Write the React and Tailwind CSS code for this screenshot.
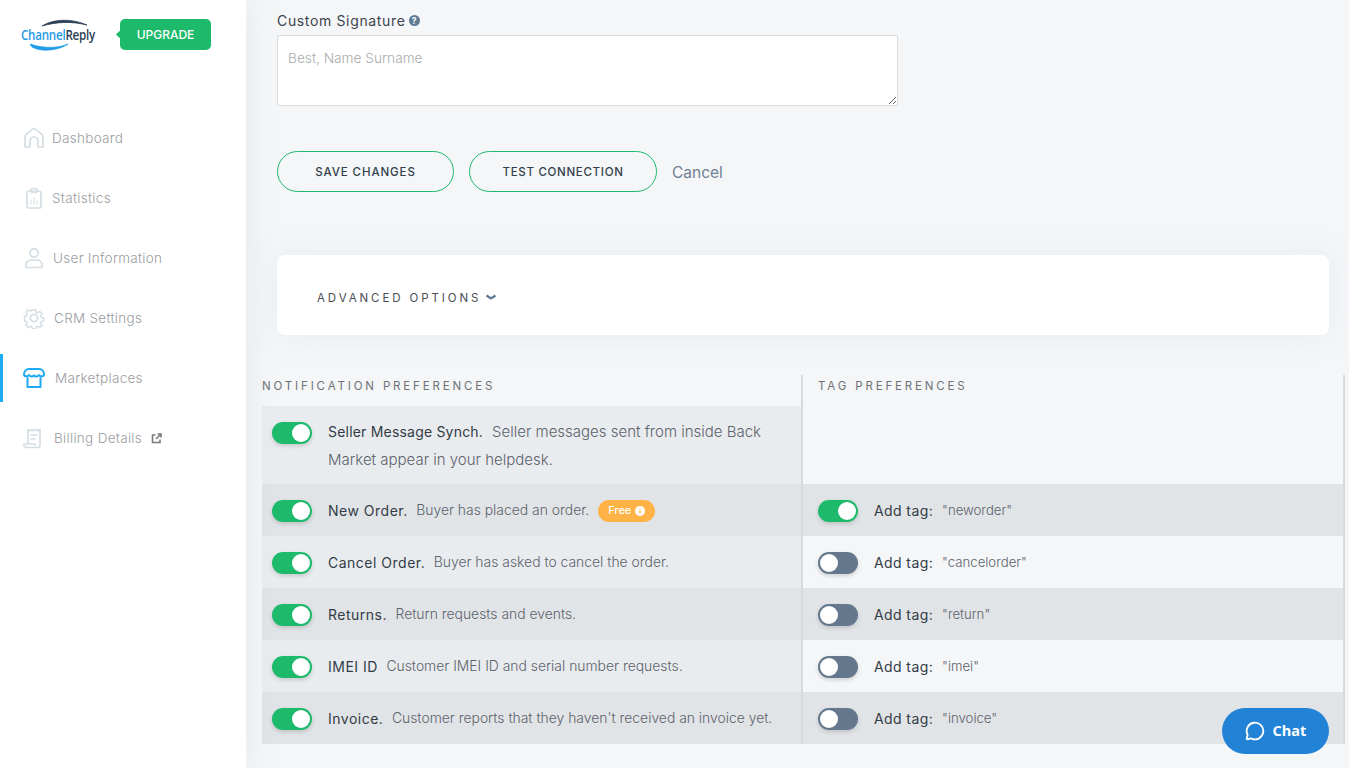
import { MessageCircle } from 'lucide-react';

const navItems = [
  { label: 'Dashboard', gap: 'ml-[7px]', icon: 'home' },
  { label: 'Statistics', gap: 'ml-[7px]', icon: 'stats' },
  { label: 'User Information', gap: 'ml-[8px]', icon: 'user' },
  { label: 'CRM Settings', gap: 'ml-[9px]', icon: 'gear' },
  { label: 'Marketplaces', gap: 'ml-[10px]', icon: 'store', active: true },
  { label: 'Billing Details', gap: 'ml-[9px]', icon: 'bill', external: true },
];

const rows = [
  { title: 'New Order.', desc: 'Buyer has placed an order.', free: true, tag: '"neworder"', tagOn: true, dark: true },
  { title: 'Cancel Order.', desc: 'Buyer has asked to cancel the order.', tag: '"cancelorder"' },
  { title: 'Returns.', desc: 'Return requests and events.', tag: '"return"', dark: true },
  { title: 'IMEI ID', desc: 'Customer IMEI ID and serial number requests.', tag: '"imei"' },
  { title: 'Invoice.', desc: "Customer reports that they haven't received an invoice yet.", tag: '"invoice"', dark: true },
];

function NavIcon({ name }) {
  const color = name === 'store' ? '#1cabf2' : '#d5dee3';
  return (
    <svg width="22" height="22" viewBox="0 0 22 22" fill="none" stroke={color} strokeWidth={name === 'store' ? 2 : 1.7} strokeLinecap="round" strokeLinejoin="round">
      {name === 'home' && <path d="M2 20V9.5Q2 8.5 3 7.5L9.5 2.2Q11 1 12.5 2.2L19 7.5Q20 8.5 20 9.5V20H15V14A4 4 0 0 0 7 14V20Z" />}
      {name === 'stats' && (
        <>
          <rect x="4" y="4" width="14" height="17" rx="2" />
          <rect x="8" y="1.5" width="6" height="4" rx="2" />
          <path d="M8 17v-4M11 17v-6M14 17v-3" strokeWidth="1" />
        </>
      )}
      {name === 'user' && (
        <>
          <circle cx="11" cy="6" r="4.2" />
          <path d="M3 20.5v-2.5a5 5 0 0 1 5-5h6a5 5 0 0 1 5 5v2.5z" />
        </>
      )}
      {name === 'gear' && (
        <>
          <circle cx="11" cy="11" r="3.6" />
          <path d="M9.3 1.8h3.4l.6 2.6 1.9.8 2.3-1.4 2.4 2.4-1.4 2.3.8 1.9 2.4.6v3.4l-2.4.6-.8 1.9 1.4 2.3-2.4 2.4-2.3-1.4-1.9.8-.6 2.2H9.3l-.6-2.2-1.9-.8-2.3 1.4-2.4-2.4 1.4-2.3-.8-1.9-2.2-.6V9.1l2.2-.6.8-1.9-1.4-2.3 2.4-2.4 2.3 1.4 1.9-.8z" transform="translate(1.1 1.1) scale(.9)" />
        </>
      )}
      {name === 'store' && (
        <>
          <path d="M6 2h10c3 0 5 2.5 5 5.5 0 2-3.500 2.500-5 .5-1.200 2-3.800 2-5 .3-1.200 1.700-3.800 1.700-5-.3-1.500 2-5 1.500-5-.5C1 4.500 3 2 6 2z" />
          <path d="M4.5 11v9h13v-9" />
        </>
      )}
      {name === 'bill' && (
        <>
          <path d="M5 17V2.500l2 1.300 2-1.300 2 1.300 2-1.300 2 1.300 2-1.300V18a2.500 2.500 0 0 1-2.500 2.500H3.500A2.500 2.500 0 0 1 1 18v-1h11v1.500" />
          <path d="M8 8h6M8 12h4" />
        </>
      )}
    </svg>
  );
}

function Toggle({ on = true }) {
  return (
    <div className={`relative h-[22px] w-[40px] shrink-0 rounded-full shadow-[0_2px_4px_rgba(0,0,0,0.15)] ${on ? 'bg-[#1dba6b]' : 'bg-[#65778c]'}`}>
      <div className={`absolute top-[2px] h-[18px] w-[18px] rounded-full bg-white ${on ? 'right-[2px]' : 'left-[2px]'}`} />
    </div>
  );
}

function Sidebar() {
  return (
    <aside className="z-10 flex h-full w-[246px] shrink-0 flex-col bg-white shadow-[0_0_30px_rgba(170,185,200,0.2)]">
      <div className="flex h-[68px] items-start pl-[21px] pt-[19px]">
        <div className="relative h-[33px] w-[76px]">
          <svg className="absolute left-0 top-0" width="76" height="33" viewBox="0 0 76 33" fill="none">
            <path d="M21 7C32 0 50-1 66 6 50 2 35 3 21 7z" fill="#2c3e56" stroke="#2c3e56" strokeWidth="0.8" />
            <path d="M9 25c14 5 30 4 38 0-10 7-28 8-36 3z" fill="#1f9be8" stroke="#1f9be8" strokeWidth="0.8" />
          </svg>
          <span className="absolute left-0 top-[6px] origin-left scale-x-[0.83] whitespace-nowrap font-['Open_Sans',sans-serif] text-[14px] font-semibold leading-[20px] tracking-[-0.3px] text-[#1f9be8]">
            Channel<span className="text-[#2c3e56]">Reply</span>
          </span>
        </div>
        <div className="relative ml-[23px] flex h-[31px] w-[91px] items-center justify-center rounded-[5px] bg-[#1dba6b] text-[12px] font-medium text-white">
          <div className="absolute left-[-3px] top-[13px] h-[5px] w-[5px] rotate-45 bg-[#1dba6b]" />
          UPGRADE
        </div>
      </div>
      <nav className="mt-[46px] flex flex-col">
        {navItems.map((item) => (
          <div key={item.label} className={`mb-[12px] flex h-[48px] items-center ${item.active ? 'border-l-[3px] border-[#1cabf2] pl-[20px]' : 'pl-[23px]'}`}>
            <NavIcon name={item.icon} />
            <span className={`${item.gap} text-[13.5px] font-light tracking-[0.3px] text-[#9a9da1]`}>{item.label}</span>
            {item.external && (
              <svg className="ml-[9px]" width="11" height="11" viewBox="0 0 11 11" fill="none" stroke="#77797c" strokeWidth="1.6">
                <path d="M4.5 2H1.500v7.500H9V6.500M5 6l4.500-4.500M6.500 1h3.500v3.500" />
              </svg>
            )}
          </div>
        ))}
      </nav>
    </aside>
  );
}

function Header() {
  return (
    <div className="flex h-[31px]">
      <div className="w-[539px] pt-[3px] text-[11.5px] tracking-[2.85px] text-[#6e7276]">NOTIFICATION PREFERENCES</div>
      <div className="flex-1 border-x-2 border-[#d8dadc] pl-[15px] pt-[3px] text-[11.5px] tracking-[2.85px] text-[#6e7276]">TAG PREFERENCES</div>
    </div>
  );
}

function NotifRow({ row }) {
  const left = row.dark ? 'bg-[#e1e4e7]' : 'bg-[#e9ecef]';
  const right = row.dark ? 'bg-[#e1e4e7]' : 'bg-[#f4f6f8]';
  return (
    <div className="flex h-[52px]">
      <div className={`flex w-[539px] items-center pl-[10px] pt-[1px] ${left}`}>
        <Toggle />
        <span className="ml-[16px] text-[14px] tracking-[0.5px] text-[#333b46]">{row.title}</span>
        <span className="ml-[8.5px] text-[13.9px] font-light text-[#5c636c]">{row.desc}</span>
        {row.free && (
          <span className="ml-[9px] flex h-[22px] w-[57px] items-center justify-center gap-[4px] rounded-full bg-[#ffb347] text-[11px] font-medium text-white">
            Free
            <svg width="10" height="10" viewBox="0 0 10 10"><circle cx="5" cy="5" r="5" fill="#fff" /><path d="M5 4.3v3M5 2.3v.9" stroke="#ffb347" strokeWidth="1.4" /></svg>
          </span>
        )}
      </div>
      <div className={`flex flex-1 items-center border-x-2 border-[#d8dadc] pl-[15px] pt-[1px] ${right}`}>
        <Toggle on={row.tagOn === true} />
        <span className="ml-[16px] text-[14px] tracking-[0.4px] text-[#333b46]">Add tag:</span>
        <span className="ml-[9px] text-[13.2px] font-light text-[#5c636c]">{row.tag}</span>
      </div>
    </div>
  );
}

export default function App() {
  return (
    <div className="flex h-[768px] w-full overflow-hidden bg-[#f4f6f8] font-['Inter','Liberation_Sans',sans-serif]">
      <Sidebar />
      <main className="relative min-w-0 flex-1">
        <div className="pl-[31px] pr-[20px]">
          <div className="flex h-[35px] items-center pt-[5px] text-[14px] tracking-[0.65px] text-[#3d444d]">
            Custom Signature
            <svg className="ml-[4px]" width="11" height="11" viewBox="0 0 11 11">
              <circle cx="5.5" cy="5.5" r="5.5" fill="#5f7a95" />
              <text x="5.5" y="8.5" textAnchor="middle" fontSize="8.5" fontWeight="700" fill="#fff">?</text>
            </svg>
          </div>
          <textarea
            className="block h-[71px] w-[621px] rounded-[2px] border border-[#d9dbdd] bg-white px-[10px] pt-[13px] text-[13.7px] font-light leading-[18px] text-[#3d444d] outline-none placeholder:text-[#a9abad]"
            placeholder="Best, Name Surname"
          />
          <div className="mt-[45px] flex items-center">
            <button className="h-[41px] w-[177px] rounded-full border border-[#1dba6b] pt-[3px] text-[11.5px] font-medium tracking-[0.9px] text-[#333f4c]">SAVE CHANGES</button>
            <button className="ml-[15px] h-[41px] w-[188px] rounded-full border border-[#1dba6b] pt-[3px] text-[11.5px] font-medium tracking-[0.7px] text-[#333f4c]">TEST CONNECTION</button>
            <span className="ml-[15px] pt-[3px] text-[15.5px] text-[#6f8093]">Cancel</span>
          </div>
          <div className="mt-[63px] flex h-[80px] items-center rounded-[8px] bg-white pl-[40px] pt-[7px] text-[11.5px] tracking-[2.9px] text-[#4a4e54] shadow-[0_0_30px_rgba(170,185,200,0.15)]">
            ADVANCED OPTIONS
            <svg className="mb-[3px] ml-[4px]" width="12" height="7" viewBox="0 0 12 7" fill="none" stroke="#5f7a95" strokeWidth="2.2"><path d="M1.5 1.500 6 4.500l4.500-3" /></svg>
          </div>
        </div>
        <div className="ml-[16px] mr-[4px] mt-[40px]">
          <Header />
          <div className="flex h-[78px]">
            <div className="flex w-[539px] items-start bg-[#e9ecef] pl-[10px] pt-[16px]">
              <Toggle />
              <div className="-mt-[4px] ml-[16px] text-[15px] font-light leading-[28px] text-[#5c636c]">
                <div className="flex items-baseline">
                  <span className="mr-[9px] text-[14px] font-normal tracking-[0.2px] text-[#333b46]">Seller Message Synch.</span>
                  <span>Seller messages sent from inside Back</span>
                </div>
                <div>Market appear in your helpdesk.</div>
              </div>
            </div>
            <div className="flex-1 border-x-2 border-[#d8dadc]" />
          </div>
          {rows.map((row) => (
            <NotifRow key={row.title} row={row} />
          ))}
        </div>
        <button className="absolute bottom-[14px] right-[20px] flex h-[46px] w-[107px] items-center justify-center gap-[8px] rounded-full bg-[#2283d6] font-['Open_Sans',sans-serif] text-[14.5px] font-bold text-white">
          <MessageCircle size={20} strokeWidth={2.2} />
          Chat
        </button>
      </main>
    </div>
  );
}
